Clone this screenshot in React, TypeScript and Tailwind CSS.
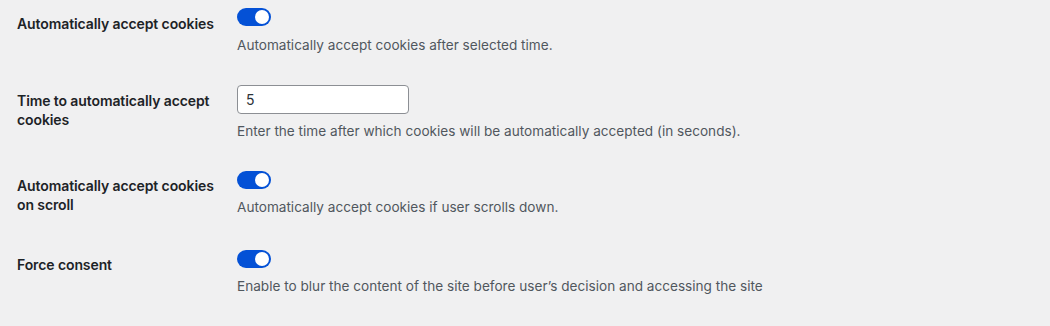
import React from "react";

function Toggle() {
  return (
    <div className="relative h-[18px] w-[34px] rounded-full bg-[#0451d6]">
      <div className="absolute right-[2px] top-[2px] h-[14px] w-[14px] rounded-full bg-white" />
    </div>
  );
}

function Row({
  label,
  control,
  desc,
  height,
  labelMt,
  descMt,
}: {
  label: string;
  control: React.ReactNode;
  desc: string;
  height: string;
  labelMt: string;
  descMt: string;
}) {
  return (
    <div className={`flex items-start ${height}`}>
      <div
        className={`ml-[17px] w-[200px] text-[14px] font-semibold leading-[19px] tracking-[-0.1px] text-[#1d2327] ${labelMt}`}
      >
        {label}
      </div>
      <div className="ml-[20px] flex flex-col items-start">
        {control}
        <p className={`text-[13.6px] leading-[20px] text-[#50575e] ${descMt}`}>{desc}</p>
      </div>
    </div>
  );
}

export default function App() {
  return (
    <div className="h-[326px] w-full overflow-hidden bg-[#f0f0f1] pt-[8px] font-['Inter','Noto_Sans',sans-serif]">
      <Row
        label="Automatically accept cookies"
        control={<Toggle />}
        desc="Automatically accept cookies after selected time."
        height="h-[77px]"
        labelMt="mt-[5.5px]"
        descMt="mt-[8.5px]"
      />
      <Row
        label="Time to automatically accept cookies"
        control={
          <input
            type="text"
            defaultValue="5"
            className="h-[29px] w-[172px] rounded-[4px] border border-[#8c8f94] bg-white px-[8px] text-[14px] text-[#2c3338] outline-none"
          />
        }
        desc="Enter the time after which cookies will be automatically accepted (in seconds)."
        height="h-[86px]"
        labelMt="mt-[6px]"
        descMt="mt-[6.5px]"
      />
      <Row
        label="Automatically accept cookies on scroll"
        control={<Toggle />}
        desc="Automatically accept cookies if user scrolls down."
        height="h-[79px]"
        labelMt="mt-[5px]"
        descMt="mt-[8px]"
      />
      <Row
        label="Force consent"
        control={<Toggle />}
        desc="Enable to blur the content of the site before user’s decision and accessing the site"
        height="h-[68px]"
        labelMt="mt-[4.5px]"
        descMt="mt-[8px]"
      />
    </div>
  );
}
